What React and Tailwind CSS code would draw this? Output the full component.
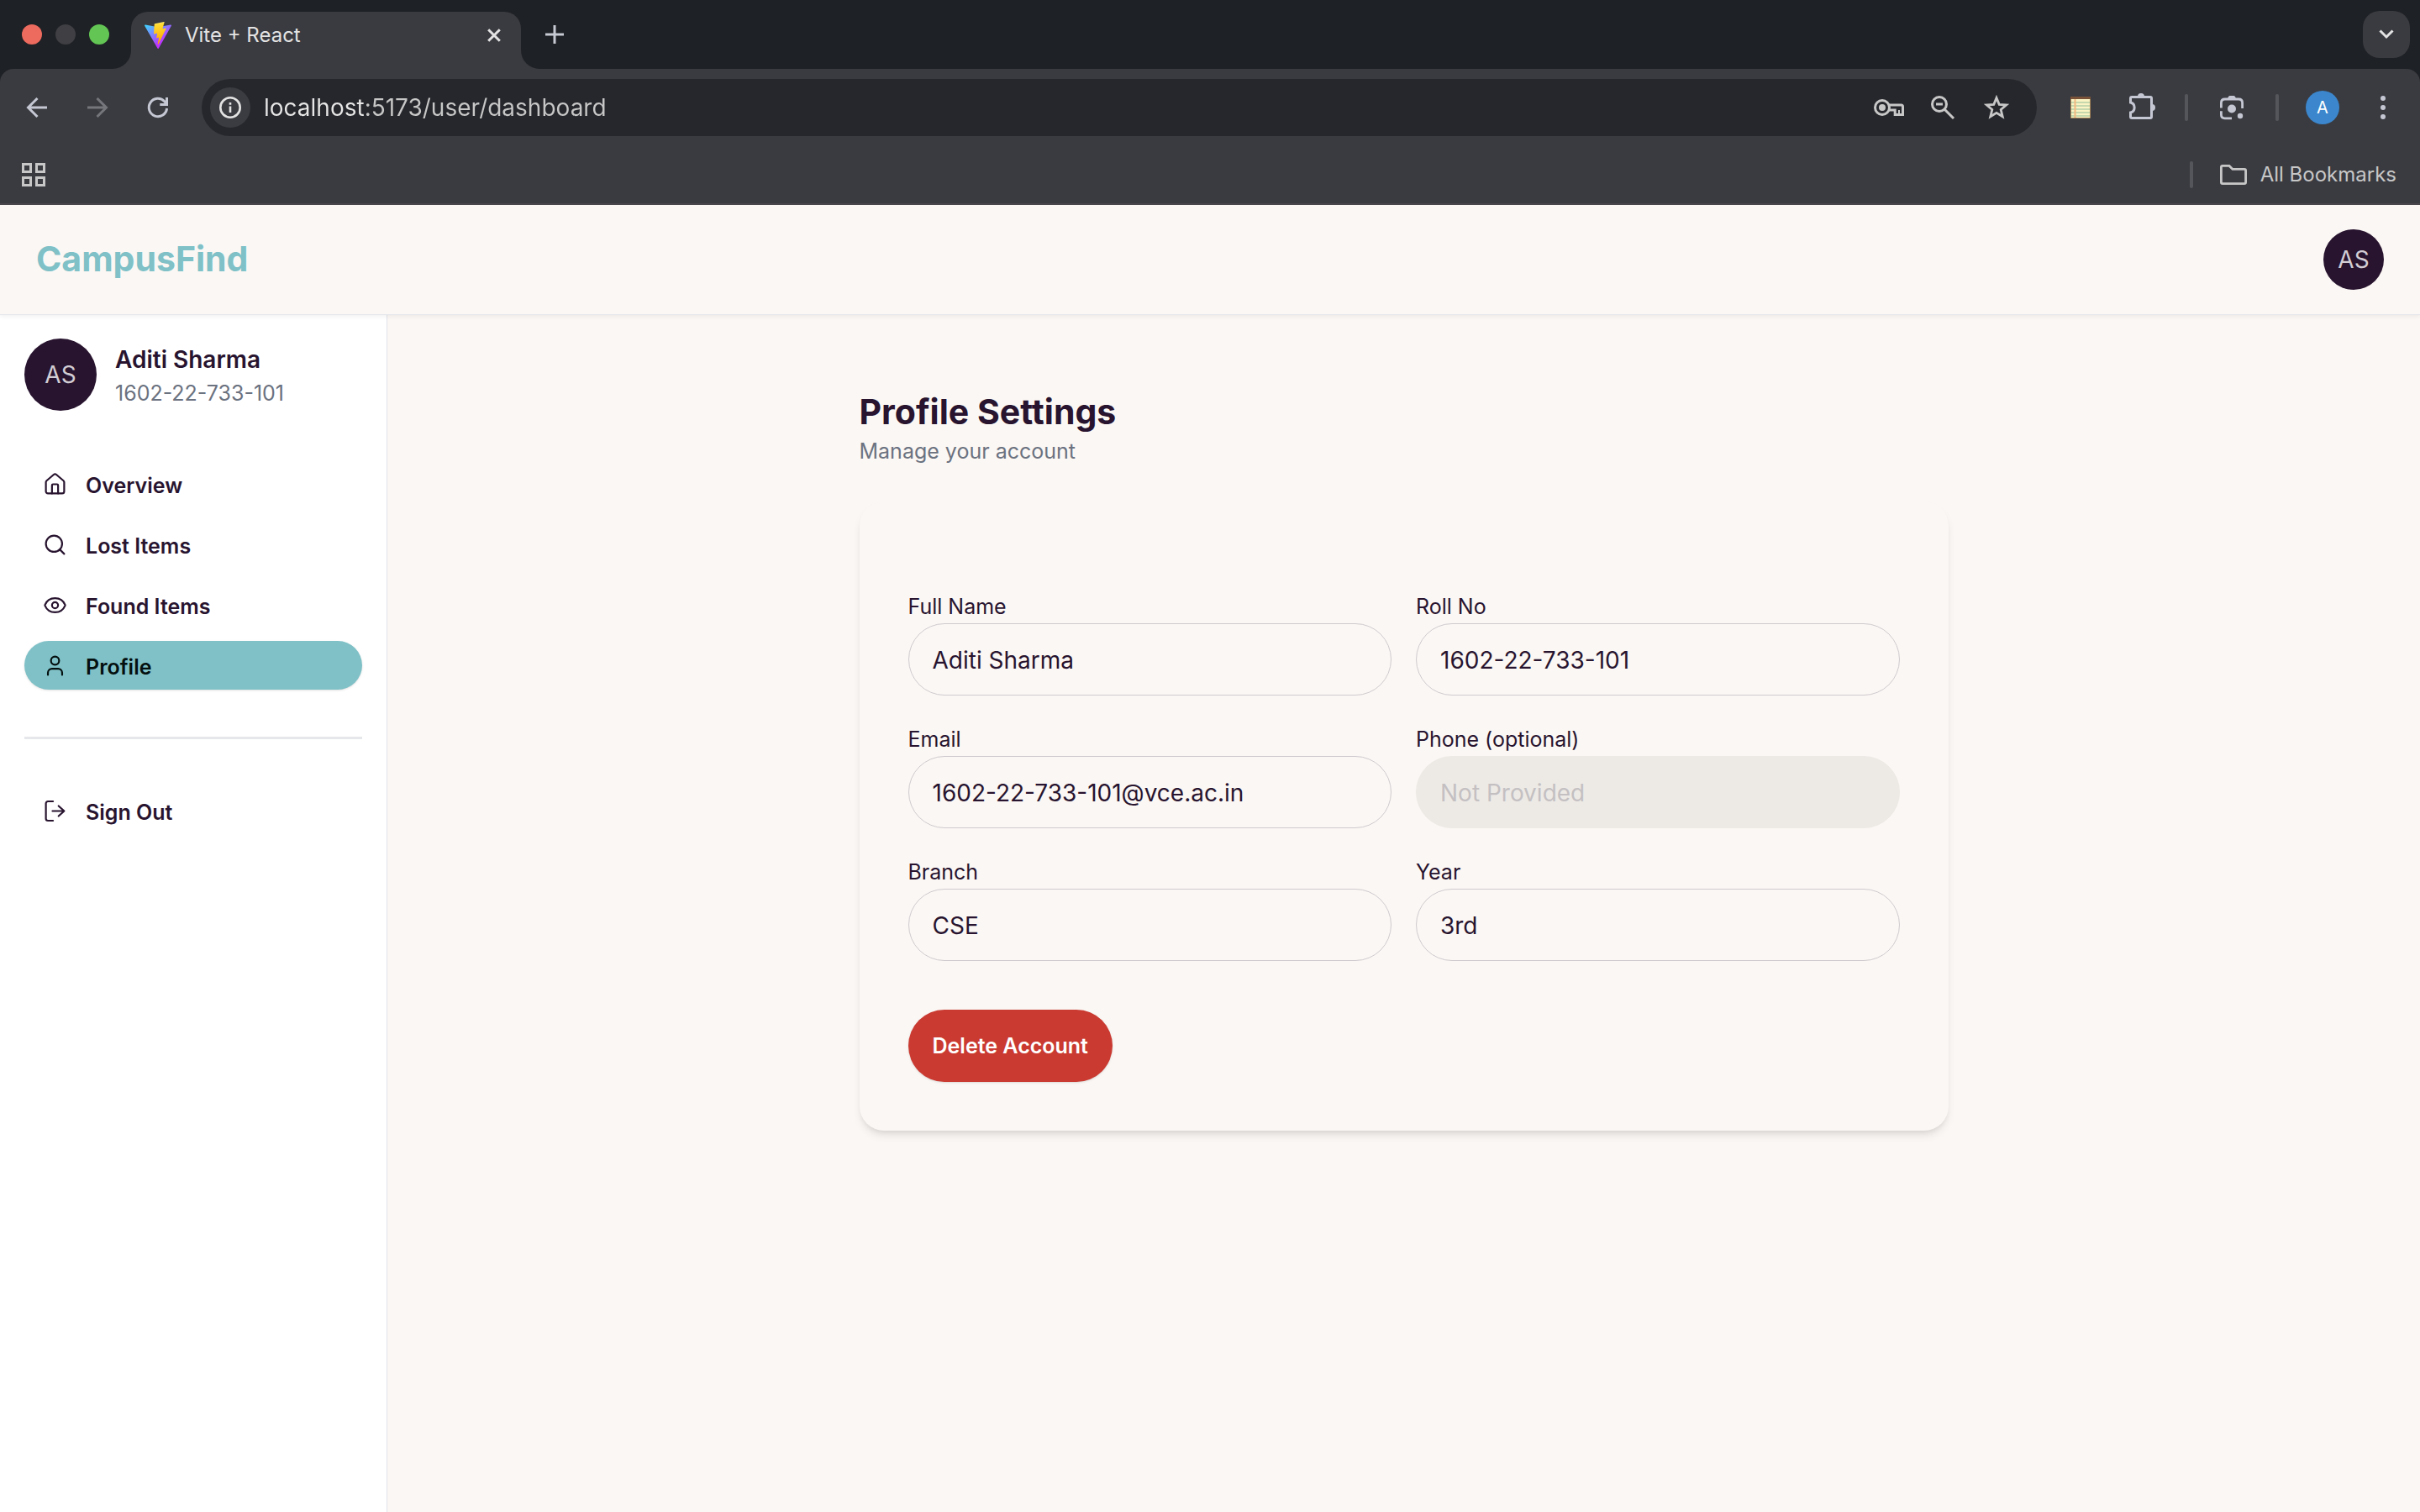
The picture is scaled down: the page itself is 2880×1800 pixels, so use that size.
import React from 'react';
import { House, Search, Eye, User } from 'lucide-react';

function ViteLogo() {
  return (
    <svg viewBox="0 0 256 257" className="size-8 shrink-0" aria-hidden="true">
      <defs>
        <linearGradient id="viteBody" x1="-.828%" x2="57.636%" y1="7.652%" y2="78.411%">
          <stop offset="0%" stopColor="#41D1FF" />
          <stop offset="100%" stopColor="#BD34FE" />
        </linearGradient>
        <linearGradient id="viteBolt" x1="43.376%" x2="50.316%" y1="2.242%" y2="89.03%">
          <stop offset="0%" stopColor="#FFEA83" />
          <stop offset="8.333%" stopColor="#FFDD35" />
          <stop offset="100%" stopColor="#FFA800" />
        </linearGradient>
      </defs>
      <path fill="url(#viteBody)" d="M255.153 37.938L134.897 252.976c-2.483 4.44-8.862 4.466-11.382.048L.875 37.958c-2.746-4.814 1.371-10.646 6.827-9.67l120.385 21.517a6.537 6.537 0 0 0 2.322-.004l117.867-21.483c5.438-.991 9.574 4.796 6.877 9.62Z" />
      <path fill="url(#viteBolt)" d="M185.432.063L96.44 17.501a3.268 3.268 0 0 0-2.634 3.014l-5.474 92.456a3.268 3.268 0 0 0 3.997 3.378l24.777-5.718c2.318-.535 4.413 1.507 3.936 3.838l-7.361 36.047c-.495 2.426 1.782 4.5 4.151 3.78l15.304-4.649c2.372-.72 4.652 1.36 4.15 3.788l-11.698 56.621c-.732 3.542 3.979 5.473 5.943 2.437l1.313-2.028l72.516-144.72c1.215-2.423-.88-5.186-3.54-4.672l-25.505 4.922c-2.396.462-4.435-1.77-3.759-4.114l16.646-57.705c.677-2.35-1.37-4.583-3.769-4.113Z" />
    </svg>
  );
}

function Glyph({ w, h, sw = 3, children }) {
  return (
    <svg width={w} height={h} viewBox={`0 0 ${w} ${h}`} fill="none" stroke="currentColor" strokeWidth={sw} className="overflow-visible" aria-hidden="true">
      {children}
    </svg>
  );
}

function IconButton({ label, className = '', children }) {
  return (
    <button type="button" aria-label={label} className={`flex size-14 shrink-0 items-center justify-center rounded-full ${className}`}>
      {children}
    </button>
  );
}

function Separator() {
  return <span className="mx-2 h-8 w-1 shrink-0 rounded-full bg-[#55565c]" />;
}

function TabStrip() {
  return (
    <div className="flex h-[82px] items-end bg-[#1e2125]">
      <div className="flex h-full items-center gap-4 pl-[26px]">
        <button type="button" aria-label="Close window" className="size-6 rounded-full bg-[#ec6a5e]" />
        <button type="button" aria-label="Minimize window" className="size-6 rounded-full bg-[#3f3f44]" />
        <button type="button" aria-label="Maximize window" className="size-6 rounded-full bg-[#62c554]" />
      </div>
      <div className="ml-1 size-[22px] bg-[#3a3b41]">
        <div className="size-full rounded-br-[22px] bg-[#1e2125]" />
      </div>
      <div className="flex h-[68px] w-[464px] items-center gap-4 rounded-t-[20px] bg-[#3a3b41] px-4 pb-3">
        <ViteLogo />
        <span className="flex-1 text-2xl text-[#e3e3e3]">Vite + React</span>
        <button type="button" aria-label="Close tab" className="flex size-8 items-center justify-center text-[#e3e3e3]">
          <Glyph w={16} h={16}><path d="M1.2 1.2l13.6 13.6M14.8 1.2L1.2 14.8" /></Glyph>
        </button>
      </div>
      <div className="size-[22px] bg-[#3a3b41]">
        <div className="size-full rounded-bl-[22px] bg-[#1e2125]" />
      </div>
      <div className="flex h-full flex-1 items-center justify-between pr-3">
        <button type="button" aria-label="New tab" className="flex size-9 items-center justify-center text-[#c7c9d3]">
          <Glyph w={22} h={22}><path d="M11 0v22M0 11h22" /></Glyph>
        </button>
        <button type="button" aria-label="Search tabs" className="flex size-14 items-center justify-center rounded-[20px] bg-[#3a3b41] text-[#e3e3e3]">
          <Glyph w={18} h={12}><path d="M1.5 1.5L9 9l7.5-7.5" /></Glyph>
        </button>
      </div>
    </div>
  );
}

function Toolbar() {
  return (
    <div className="flex h-[92px] items-center gap-6 px-4 text-[#c5c8d3]">
      <div className="flex gap-4">
        <IconButton label="Back">
          <Glyph w={26} h={24}><path d="M25 12H2.500M13.500 1L2.500 12l11 11" /></Glyph>
        </IconButton>
        <IconButton label="Forward" className="text-[#75767c]">
          <Glyph w={26} h={24}><path d="M1 12h22.500M12.500 1l11 11-11 11" /></Glyph>
        </IconButton>
        <IconButton label="Reload">
          <Glyph w={24} h={24}>
            <path d="M22.600 13A10.700 10.700 0 1 1 19.800 4.700L23 8.500" />
            <path d="M22.500 0v8.500h-8.200" />
          </Glyph>
        </IconButton>
      </div>
      <div className="flex h-[68px] flex-1 items-center rounded-full bg-[#26272c] pr-5 pl-[10px] text-[#c7c7c7]">
        <button type="button" aria-label="View site information" className="flex size-12 shrink-0 items-center justify-center rounded-full bg-[#3b3c42] text-[#e3e3e3]">
          <Glyph w={26} h={26} sw={2.6}>
            <circle cx="13" cy="13" r="11.700" />
            <path d="M13 11.500v7.500M13 7v2.700" />
          </Glyph>
        </button>
        <input
          type="text"
          aria-label="Address"
          defaultValue="localhost:5173/user/dashboard"
          className="ml-4 min-w-0 flex-1 bg-[linear-gradient(90deg,#e6e6e6_120px,#c7c7c7_120px)] bg-clip-text text-[28px] text-transparent outline-none"
        />
        <div className="flex gap-2">
          <IconButton label="Passwords">
            <Glyph w={36} h={20}>
              <circle cx="10" cy="10" r="8.500" />
              <circle cx="10" cy="10" r="4" fill="currentColor" stroke="none" />
              <path d="M18 7h14.500q2 0 2 2v9.500h-9.300V13H18" />
              <path d="M30 13v5" strokeWidth="2" />
            </Glyph>
          </IconButton>
          <IconButton label="Zoom">
            <Glyph w={28} h={28}>
              <circle cx="10" cy="10" r="8.500" />
              <path d="M6 10h8M16 16l11 11" />
            </Glyph>
          </IconButton>
          <IconButton label="Bookmark this tab">
            <Glyph w={30} h={30} sw={2.8}>
              <path d="M15 3.500l3.200 7.900 8.500.6-6.500 5.500 2 8.300L15 21.300l-7.200 4.500 2-8.300L3.300 12l8.500-.6z" />
            </Glyph>
          </IconButton>
        </div>
      </div>
      <div className="flex items-center gap-4">
        <IconButton label="Notes extension">
          <svg width="26" height="28" viewBox="0 0 26 28" aria-hidden="true">
            <rect x="1" y="1" width="24" height="26" rx="1" fill="#a8875a" />
            <rect x="2" y="4" width="22" height="22" fill="#faf3c3" />
            <rect x="1" y="1" width="24" height="3" fill="#7a5238" />
            <path d="M2 8h22M2 12h22M2 16h22M2 20h22M2 24h22" stroke="#b4cfa8" strokeWidth="1.500" />
            <path d="M6.500 4v22" stroke="#f2b880" strokeWidth="2" />
          </svg>
        </IconButton>
        <IconButton label="Extensions">
          <Glyph w={28} h={36}>
            <path d="M1.500 12V7q0-1.500 1.500-1.500h22q1.500 0 1.500 1.500v22q0 1.500-1.500 1.500H3q-1.500 0-1.500-1.500v-5a6.200 6.200 0 0 0 0-12z" />
            <path d="M10 5a4 4 0 0 1 8 0zM27 14a4 4 0 0 1 0 8z" fill="currentColor" stroke="none" />
          </Glyph>
        </IconButton>
        <Separator />
        <IconButton label="Search with Lens">
          <Glyph w={28} h={29} sw={2.8}>
            <path d="M1.400 14.500V8.500Q1.400 4 5.900 4h16.200q4.500 0 4.500 4.500v6.500M1.400 18.300v4.200q0 4.300 4.300 4.300H14" />
            <path d="M9 3.500q1-3.500 2.500-3.500h5q1.500 0 2.500 3.500z" fill="currentColor" stroke="none" />
            <circle cx="14" cy="15.500" r="5" fill="currentColor" stroke="none" />
            <circle cx="24" cy="24" r="3.200" fill="currentColor" stroke="none" />
          </Glyph>
        </IconButton>
        <Separator />
        <IconButton label="Profile A">
          <span className="flex size-10 items-center justify-center rounded-full bg-[#3b86cc] text-xl text-white">A</span>
        </IconButton>
        <IconButton label="Browser menu">
          <Glyph w={8} h={28}>
            <g fill="currentColor" stroke="none">
              <circle cx="4" cy="3" r="3" />
              <circle cx="4" cy="14" r="3" />
              <circle cx="4" cy="25" r="3" />
            </g>
          </Glyph>
        </IconButton>
      </div>
    </div>
  );
}

function BookmarksBar() {
  return (
    <div className="flex h-[70px] items-center justify-between border-b-2 border-[#4a474c] pr-7 pl-[26px] text-[#c7c7c7]">
      <button type="button" aria-label="Tab groups">
        <Glyph w={28} h={28}>
          <path d="M1.500 1.500h9v9h-9zM17.500 1.500h9v9h-9zM1.500 17.500h9v9h-9zM17.500 17.500h9v9h-9z" />
        </Glyph>
      </button>
      <div className="flex items-center gap-8">
        <span className="h-8 w-1 rounded-full bg-[#55565c]" />
        <button type="button" className="flex items-center gap-4 text-2xl">
          <Glyph w={32} h={24} sw={2.8}>
            <path d="M1.400 3q0-1.600 1.600-1.600h8l4 4h14q1.600 0 1.600 1.600v14q0 1.600-1.600 1.600H3q-1.600 0-1.600-1.600z" />
          </Glyph>
          All Bookmarks
        </button>
      </div>
    </div>
  );
}

function NavItem({ icon: Icon, label, active }) {
  return (
    <a
      href="#"
      aria-current={active ? 'page' : undefined}
      className={`flex h-[58px] items-center gap-[22px] rounded-full px-[22px] text-[25px] leading-9 font-semibold ${active ? 'bg-[#7fc1c7] text-[#04100f] shadow-sm' : ''}`}
    >
      <Icon size={29} strokeWidth={1.8} />
      <span className="pt-[3px]">{label}</span>
    </a>
  );
}

function Sidebar() {
  return (
    <aside className="flex w-[461px] shrink-0 flex-col border-r border-[#e2e4e9] bg-white px-[29px] pt-7">
      <div className="flex items-center gap-[22px]">
        <div className="flex size-[86px] items-center justify-center rounded-full bg-[#28142f] text-[28px] text-[#d2cdd4]">AS</div>
        <div className="pt-1">
          <p className="text-[28px] leading-10 font-semibold">Aditi Sharma</p>
          <p className="text-[25px] leading-10 text-[#6b7280]">1602-22-733-101</p>
        </div>
      </div>
      <nav className="mt-[58px] flex flex-col gap-[14px]">
        <NavItem icon={House} label="Overview" />
        <NavItem icon={Search} label="Lost Items" />
        <NavItem icon={Eye} label="Found Items" />
        <NavItem icon={User} label="Profile" active />
      </nav>
      <hr className="my-14 border-t-3 border-[#e5e7eb]" />
      <NavItem icon={SignOutIcon} label="Sign Out" />
    </aside>
  );
}

function SignOutIcon({ size, strokeWidth }) {
  return (
    <svg width={size} height={size} viewBox="0 0 24 24" fill="none" stroke="currentColor" strokeWidth={strokeWidth} strokeLinecap="round" strokeLinejoin="round" aria-hidden="true">
      <path d="M10 2.500H5a2 2 0 0 0-2 2v15a2 2 0 0 0 2 2h5M9.500 12H21M15.500 7l5.500 5-5.500 5" />
    </svg>
  );
}

function Field({ id, label, value, placeholder, disabled }) {
  return (
    <div className="flex flex-col">
      <label htmlFor={id} className="pb-1 text-[25px] leading-8">{label}</label>
      <input
        id={id}
        type="text"
        defaultValue={value}
        placeholder={placeholder}
        disabled={disabled}
        readOnly={!disabled}
        className="h-[86px] w-full rounded-full border border-[#cfcace] bg-transparent px-7 pt-0.5 text-[28px] outline-none placeholder:text-[#c4c0c2] disabled:border-[#edeae6] disabled:bg-[#edeae6]"
      />
    </div>
  );
}

function ProfileSettings() {
  return (
    <main className="flex-1 px-8 pt-[86px]">
      <div className="mx-auto w-full max-w-[1296px]">
        <h1 className="text-[41px] leading-[58px] font-bold">Profile Settings</h1>
        <p className="text-[25px] leading-9 text-[#6b7280]">Manage your account</p>
        <form className="mt-[42px] rounded-[29px] bg-[#fbf7f4] px-[58px] pt-[109px] pb-[58px] shadow-[0_7px_11px_-2px_rgba(0,0,0,0.1),0_4px_7px_-4px_rgba(0,0,0,0.1)]">
          <div className="grid grid-cols-2 gap-x-[29px] gap-y-9">
            <Field id="name" label="Full Name" value="Aditi Sharma" />
            <Field id="roll" label="Roll No" value="1602-22-733-101" />
            <Field id="email" label="Email" value="1602-22-733-101@vce.ac.in" />
            <Field id="phone" label="Phone (optional)" placeholder="Not Provided" disabled />
            <Field id="branch" label="Branch" value="CSE" />
            <Field id="year" label="Year" value="3rd" />
          </div>
          <button type="button" className="mt-[58px] h-[86px] rounded-full bg-[#ca3a31] px-[29px] pt-0.5 text-[25px] font-semibold text-white shadow-sm">
            Delete Account
          </button>
        </form>
      </div>
    </main>
  );
}

export default function App() {
  return (
    <div className="flex min-h-screen flex-col bg-[#fbf7f4] font-['Inter',sans-serif] text-[#28142f]">
      <div className="bg-[#1e2125]">
        <TabStrip />
        <div className="rounded-t-2xl bg-[#3a3b41]">
          <Toolbar />
          <BookmarksBar />
        </div>
      </div>
      <header className="relative flex h-[131px] items-center justify-between border-b border-[#e5e7eb] px-[43px] shadow-[0_2px_5px_rgba(0,0,0,0.06)]">
        <a href="#" className="text-[41px] font-bold text-[#7fc1c7]">CampusFind</a>
        <button type="button" className="flex size-[72px] items-center justify-center rounded-full bg-[#28142f] text-[28px] text-[#d2cdd4]">AS</button>
      </header>
      <div className="flex flex-1">
        <Sidebar />
        <ProfileSettings />
      </div>
    </div>
  );
}
